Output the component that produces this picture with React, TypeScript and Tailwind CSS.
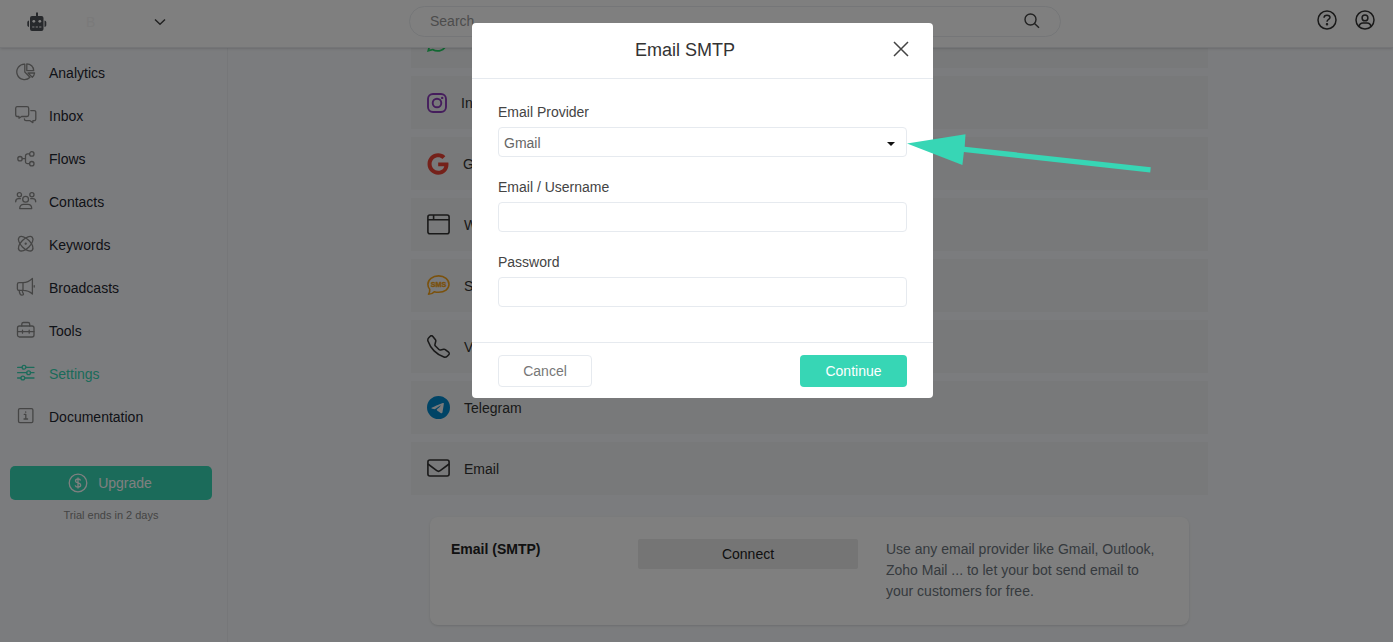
import { useState } from "react";
import type { ReactNode } from "react";
import { BsTelegram, BsTelephone, BsWhatsapp } from "react-icons/bs";
import { FaGoogle } from "react-icons/fa";

type NavItem = { label: string; icon: ReactNode; active?: boolean };
type Channel = { label: string; icon: ReactNode };

function NavIcon({ children }: { children: ReactNode }) {
  return (
    <svg
      viewBox="0 0 24 24"
      className="size-6 shrink-0"
      fill="none"
      stroke="currentColor"
      strokeWidth="1.3"
      strokeLinecap="round"
      strokeLinejoin="round"
      aria-hidden="true"
    >
      {children}
    </svg>
  );
}

const navItems: NavItem[] = [
  {
    label: "Analytics",
    icon: (
      <NavIcon>
        <path d="M9.8 3.2A7.7 7.7 0 1 0 15 16.3L9.8 11Z" />
        <path d="M11.8 2.8V9.7H18.7A6.9 6.9 0 0 0 11.8 2.8Z" />
        <path d="M13 12H19.6A7 7 0 0 1 17.3 16.2Z" />
      </NavIcon>
    ),
  },
  {
    label: "Inbox",
    icon: (
      <NavIcon>
        <path d="M2 2.6H12A1.7 1.7 0 0 1 13.7 4.3V10.8A1.7 1.7 0 0 1 12 12.5H6.6L4 14.2V12.5H2A1.7 1.7 0 0 1 0.7 10.8V4.3A1.7 1.7 0 0 1 2 2.6Z" />
        <path d="M15.8 6.6H19.2A1.6 1.6 0 0 1 20.8 8.2V15.1A1.6 1.6 0 0 1 19.2 16.7H17.9V18.6L15 16.7H11A1.6 1.6 0 0 1 9.4 15.1V14.8" />
      </NavIcon>
    ),
  },
  {
    label: "Flows",
    icon: (
      <NavIcon>
        <circle cx="5" cy="11.7" r="2.2" />
        <circle cx="16.8" cy="6.9" r="2.2" />
        <circle cx="16.8" cy="16.7" r="2.2" />
        <path d="M7.3 11.7H10.5M14.5 6.9H12.5A2 2 0 0 0 10.5 8.9V14.7A2 2 0 0 0 12.5 16.7H14.5" />
      </NavIcon>
    ),
  },
  {
    label: "Contacts",
    icon: (
      <NavIcon>
        <circle cx="10.600" cy="9.3" r="2.9" />
        <circle cx="4.400" cy="4.7" r="2.1" />
        <circle cx="16.900" cy="4.7" r="2.1" />
        <path d="M4.700 18.6C4.700 15.8 6.500 14.3 8.500 14.3H12.900C15 14.3 16.700 15.8 16.700 18.6Z" />
        <path d="M0.700 11.8C0.700 9.7 1.900 8.7 3.500 8.7H5.400M20.700 11.8C20.700 9.7 19.500 8.7 17.800 8.7H15.700" />
      </NavIcon>
    ),
  },
  {
    label: "Keywords",
    icon: (
      <NavIcon>
        <ellipse cx="10.700" cy="10.7" rx="9.2" ry="4.6" transform="rotate(45 10.7 10.7)" />
        <ellipse cx="10.700" cy="10.7" rx="9.2" ry="4.6" transform="rotate(-45 10.7 10.7)" />
        <circle cx="10.700" cy="10.7" r="0.5" fill="currentColor" />
      </NavIcon>
    ),
  },
  {
    label: "Broadcasts",
    icon: (
      <NavIcon>
        <path d="M8 6.6C12 6.6 15.2 4.6 17.4 2.5V18C15.2 15.9 12 14.4 8 14.4Z" />
        <path d="M8 6.6H4A1.6 1.6 0 0 0 2.4 8.2V12.8A1.6 1.6 0 0 0 4 14.4H8" />
        <path d="M4.2 14.4C4.3 16 4.6 17.2 5.3 18.4C6 19.4 8.5 19.2 8.5 18.2C8.5 17 7.2 17 7.4 14.5M19.2 9.7V11" />
      </NavIcon>
    ),
  },
  {
    label: "Tools",
    icon: (
      <NavIcon>
        <rect x="2.5" y="7" width="16.5" height="11" rx="2" />
        <path d="M6.8 7V5A1.6 1.6 0 0 1 8.4 3.5H13.1A1.6 1.6 0 0 1 14.7 5V7M2.5 12.6H19M7.5 11.2V14.2M14.2 11.2V14.2" />
      </NavIcon>
    ),
  },
  {
    label: "Settings",
    active: true,
    icon: (
      <NavIcon>
        <circle cx="9" cy="5.3" r="1.9" />
        <circle cx="13.6" cy="10.7" r="1.9" />
        <circle cx="7.8" cy="16" r="1.9" />
        <path d="M2.6 5.3H7.1M10.9 5.3H19M2.6 10.7H11.7M15.5 10.7H19M2.6 16H5.9M9.7 16H19" />
      </NavIcon>
    ),
  },
  {
    label: "Documentation",
    icon: (
      <NavIcon>
        <rect x="3.5" y="3.6" width="14.4" height="14" rx="1.4" />
        <path d="M9.3 9.4H10.8V14M9 14H12.6M10.7 7V7.2" />
      </NavIcon>
    ),
  },
];

const channels: Channel[] = [
  { label: "WhatsApp", icon: <BsWhatsapp className="size-[21px] text-[#25d366]" /> },
  {
    label: "Instagram",
    icon: (
      <svg viewBox="0 0 20 20" className="size-5 text-[#8a3ab9]" fill="none" stroke="currentColor" strokeWidth="1.9" aria-hidden="true">
        <rect x="1" y="1" width="18" height="18" rx="5" />
        <circle cx="10" cy="10" r="4.3" />
        <circle cx="15.200" cy="4.900" r="1.200" fill="currentColor" stroke="none" />
      </svg>
    ),
  },
  { label: "Google", icon: <FaGoogle className="size-[22px] text-[#ea4335]" /> },
  {
    label: "Webchat",
    icon: (
      <svg viewBox="0 0 23 23" className="size-[23px]" fill="none" stroke="currentColor" strokeWidth="1.6" aria-hidden="true">
        <rect x="0.9" y="2" width="21.2" height="18.8" rx="2" />
        <path d="M0.9 6.8H22.1M6.600 2V6.800" />
      </svg>
    ),
  },
  {
    label: "SMS",
    icon: (
      <svg viewBox="0 0 23 23" className="size-[23px] text-[#f5a31a]" fill="none" stroke="currentColor" strokeWidth="1.6" strokeLinejoin="round" aria-hidden="true">
        <path d="M11.6 1.9C17.6 1.9 22 5.700 22 10.300C22 15 17.6 18.300 11.6 18.300C10 18.300 8.500 18.100 7.300 17.700C5.600 19.700 3.300 20.300 1.500 20.300C2.500 18.900 2.900 17.100 2.700 15.300C1.500 13.900 0.900 12.100 0.900 10.300C0.900 5.700 5.500 1.9 11.6 1.9Z" />
        <text x="11.500" y="12.900" textAnchor="middle" fontSize="7.200" fontWeight="700" fill="currentColor" strokeWidth="0.400">
          SMS
        </text>
      </svg>
    ),
  },
  { label: "Voice", icon: <BsTelephone className="size-[23px]" /> },
  { label: "Telegram", icon: <BsTelegram className="size-[23px] text-[#0088cc]" /> },
  {
    label: "Email",
    icon: (
      <svg viewBox="0 0 23 23" className="size-[23px]" fill="none" stroke="currentColor" strokeWidth="1.6" aria-hidden="true">
        <rect x="0.900" y="3" width="21.200" height="16" rx="2" />
        <path d="M0.900 7L9.800 13.700C10.900 14.500 12.100 14.500 13.200 13.700L22.100 7" />
      </svg>
    ),
  },
];

function Header() {
  return (
    <header className="relative z-10 flex h-12 items-center border-b border-[#e8ebef] bg-white pr-[18px] shadow-sm">
      <div className="mb-1 flex w-[228px] shrink-0 items-center pl-[27px]">
        <svg viewBox="0 0 20 20" className="size-5" fill="#4f5359" aria-hidden="true">
          <path d="M9 0.500H11V4H14.500A2 2 0 0 1 16.500 6V17A2 2 0 0 1 14.500 19H5A2 2 0 0 1 3 17V6A2 2 0 0 1 5 4H9Z" />
          <path d="M2 8.500V15A2 2 0 0 1 0.300 13.500V10A2 2 0 0 1 2 8.500ZM17.500 8.500V15A2 2 0 0 0 19.300 13.500V10A2 2 0 0 0 17.500 8.500Z" />
          <g fill="#fff">
            <circle cx="6.800" cy="9.300" r="1.400" />
            <circle cx="12.800" cy="9.300" r="1.400" />
            <path d="M5.200 14.400H7.400V15.600H5.200ZM8.700 14.400H10.900V15.600H8.700ZM12.200 14.400H14.400V15.600H12.200Z" />
          </g>
        </svg>
        <button type="button" className="ml-[39px] flex w-20 items-center justify-between" aria-label="Switch bot">
          <span className="text-sm text-[#f4f4f4]">B</span>
          <svg viewBox="0 0 12 8" className="h-2 w-3" fill="none" stroke="#444" strokeWidth="1.500" aria-hidden="true">
            <path d="M1 1.500L6 6.200L11 1.500" />
          </svg>
        </button>
      </div>
      <div className="flex flex-1 justify-center pr-[75px]">
        <label className="mb-[5px] flex h-[31px] w-[652px] items-center rounded-full border border-[#eaedf0] px-5">
          <input type="search" placeholder="Search" aria-label="Search" className="min-w-0 flex-1 bg-transparent text-sm outline-none placeholder:text-[#999]" />
          <svg viewBox="0 0 16 16" className="size-4" fill="none" stroke="#444" strokeWidth="1.400" aria-hidden="true">
            <circle cx="6.500" cy="6.500" r="5.500" />
            <path d="M10.500 10.500L15 14.800" />
          </svg>
        </label>
      </div>
      <div className="mb-[7px] flex gap-[18px] text-[#333]">
        <button type="button" aria-label="Help">
          <svg viewBox="0 0 20 20" className="size-5" fill="none" stroke="currentColor" strokeWidth="1.500" aria-hidden="true">
            <circle cx="10" cy="10" r="9" />
            <path d="M7 7.800C7 6 8.300 5.200 10 5.200C11.700 5.200 13 6.100 13 7.600C13 9.600 10 9.400 10 11.800" />
            <circle cx="10" cy="14.200" r="0.500" fill="currentColor" />
          </svg>
        </button>
        <button type="button" aria-label="Account">
          <svg viewBox="0 0 20 20" className="size-5" fill="none" stroke="currentColor" strokeWidth="1.500" aria-hidden="true">
            <circle cx="10" cy="10" r="9" />
            <circle cx="10" cy="7.900" r="2.900" />
            <path d="M4 16.500C4.500 14 6 12.900 8 12.900H12C14 12.900 15.500 14 16 16.500" />
          </svg>
        </button>
      </div>
    </header>
  );
}

function Sidebar() {
  return (
    <aside className="w-[228px] shrink-0 border-r border-[#eceff3] pt-[3px]">
      <nav>
        {navItems.map((item) => (
          <a key={item.label} href="#" className="flex h-[43px] items-center gap-[10px] pl-[15px] text-sm">
            <span className={item.active ? "text-[#37d6b5]" : "text-[#8a8a8a]"}>{item.icon}</span>
            <span className={item.active ? "text-[#37d6b5]" : "text-[#1f2630]"}>{item.label}</span>
          </a>
        ))}
      </nav>
      <div className="mt-7 pr-[15px] pl-[10px] text-center">
        <button type="button" className="flex h-[34px] w-full items-center justify-center gap-[10px] rounded-[5px] bg-[#37d6b5] pr-0.5 text-sm text-white">
          <svg viewBox="0 0 20 20" className="size-5" fill="none" stroke="currentColor" strokeWidth="1.300" aria-hidden="true">
            <circle cx="10" cy="10" r="8.800" />
            <path d="M12.600 7.500C12.300 6.500 11.300 6 10 6C8.500 6 7.500 6.700 7.500 7.900C7.500 10.500 12.700 9.300 12.700 12C12.700 13.200 11.600 14 10 14C8.600 14 7.500 13.400 7.200 12.300M10 4.500V15.500" />
          </svg>
          Upgrade
        </button>
        <p className="mt-[7px] text-[11px] leading-4 text-[#8a8a8a]">Trial ends in 2 days</p>
      </div>
    </aside>
  );
}

function Settings() {
  return (
    <main className="flex-1 pr-0.5">
      <div className="mx-auto -mt-[33px] max-w-[797px]">
        <ul className="flex flex-col gap-2">
          {channels.map((channel) => (
            <li key={channel.label}>
              <button type="button" className="flex h-[53px] w-full items-center gap-[14px] bg-[#f0f2f4] pl-4 text-left text-sm text-[#333]">
                {channel.icon}
                {channel.label}
              </button>
            </li>
          ))}
        </ul>
        <section className="mx-[19px] mt-[22px] flex h-[108px] items-start rounded-lg bg-white px-[21px] pt-[22px] text-sm shadow-sm">
          <h2 className="w-[187px] font-bold text-[#222]">Email (SMTP)</h2>
          <button type="button" className="h-[30px] w-[220px] rounded-xs bg-[#eaeaea] text-[#222]">
            Connect
          </button>
          <p className="ml-7 flex-1 leading-[21px] text-[#6c757d]">
            Use any email provider like Gmail, Outlook, Zoho Mail ... to let your bot send email to your customers for free.
          </p>
        </section>
      </div>
    </main>
  );
}

function Field({ label, htmlFor, children }: { label: string; htmlFor: string; children: ReactNode }) {
  return (
    <div className="flex flex-col gap-[5px]">
      <label htmlFor={htmlFor} className="leading-5 text-[#444]">
        {label}
      </label>
      {children}
    </div>
  );
}

function SmtpDialog() {
  const [provider, setProvider] = useState("Gmail");
  const [username, setUsername] = useState("");
  const [password, setPassword] = useState("");
  const inputClass = "h-[30px] w-full rounded-sm border border-[#e6eaef] bg-white px-[5px] text-[#666] outline-none";

  return (
    <div className="fixed inset-0 right-px z-20 flex items-start justify-center bg-black/50 pt-[23px] pl-3">
      <form role="dialog" aria-labelledby="smtp-title" className="w-[461px] rounded-sm bg-white text-sm" onSubmit={(e) => e.preventDefault()}>
        <div className="flex h-14 items-center border-b border-[#e6eaef] pr-6 pl-[5px]">
          <h1 id="smtp-title" className="flex-1 text-center text-[18px] text-[#333]">
            Email SMTP
          </h1>
          <button type="button" aria-label="Close" className="mb-1">
            <svg viewBox="0 0 16 16" className="size-4" fill="none" stroke="#444" strokeWidth="1.500" aria-hidden="true">
              <path d="M1 1L15 15M15 1L1 15" />
            </svg>
          </button>
        </div>
        <div className="flex flex-col gap-5 px-[26px] pt-[23px] pb-[35px]">
          <Field label="Email Provider" htmlFor="provider">
            <div className="relative">
              <select id="provider" value={provider} onChange={(e) => setProvider(e.target.value)} className={`${inputClass} appearance-none pt-0.5`}>
                <option>Gmail</option>
              </select>
              <svg viewBox="0 0 8 4" className="pointer-events-none absolute top-[15px] right-3 h-1 w-2" fill="#111" aria-hidden="true">
                <path d="M0 0H8L4 4Z" />
              </svg>
              <svg viewBox="0 0 244 44" className="pointer-events-none absolute top-1 left-full h-11 w-[244px] max-w-none" fill="#37d6b5" aria-hidden="true">
                <path d="M0 12.600L58.500 3.300L57.700 15.700L243.800 36.300L243.200 41.500L56.900 21L55.400 34Z" />
              </svg>
            </div>
          </Field>
          <Field label="Email / Username" htmlFor="username">
            <input id="username" type="text" value={username} onChange={(e) => setUsername(e.target.value)} className={inputClass} />
          </Field>
          <Field label="Password" htmlFor="password">
            <input id="password" type="password" value={password} onChange={(e) => setPassword(e.target.value)} className={inputClass} />
          </Field>
        </div>
        <div className="flex justify-between border-t border-[#e6eaef] px-[26px] pt-3 pb-[11px]">
          <button type="button" className="h-8 w-[94px] rounded-sm border border-[#e6eaef] text-[#777]">
            Cancel
          </button>
          <button type="submit" className="h-8 w-[107px] rounded-sm bg-[#37d6b5] text-white">
            Continue
          </button>
        </div>
      </form>
    </div>
  );
}

export default function App() {
  return (
    <div className="mr-px flex h-screen flex-col overflow-hidden bg-[#f7f9fc] font-['Liberation_Sans',Arial,sans-serif]">
      <Header />
      <div className="flex min-h-0 flex-1">
        <Sidebar />
        <Settings />
      </div>
      <SmtpDialog />
    </div>
  );
}
